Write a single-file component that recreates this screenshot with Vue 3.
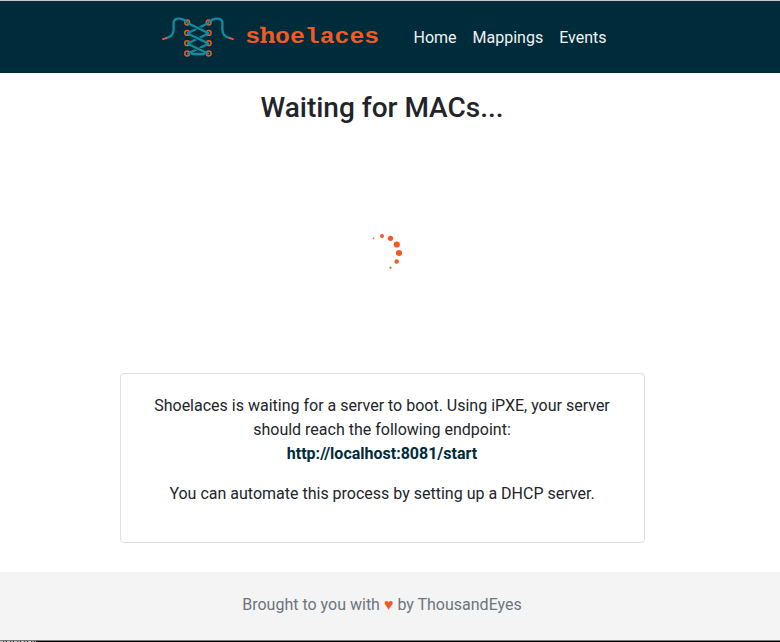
<script setup>
const links = ['Home', 'Mappings', 'Events']
const eyelets = [22.5, 32.9, 43.2, 53.5]
const dots = [
  { x: 373.5, y: 238.3, r: 0.8 },
  { x: 382, y: 236, r: 2 },
  { x: 390.5, y: 238.3, r: 2.6 },
  { x: 396.8, y: 244.5, r: 3.1 },
  { x: 399, y: 253, r: 3.1 },
  { x: 396.7, y: 261.5, r: 2.2 },
  { x: 390.5, y: 267.7, r: 1.1 },
]
</script>

<template>
  <div class="page">
    <header class="navbar">
      <svg class="logo" viewBox="155 1 235 71" width="235" height="71">
        <g fill="none" stroke="#f15a22" stroke-width="1.5">
          <template v-for="y in eyelets" :key="y">
            <circle cx="187.2" :cy="y" r="2.4" />
            <circle cx="208.7" :cy="y" r="2.4" />
          </template>
        </g>
        <g fill="none" stroke="#118c9c" stroke-width="2.3" stroke-linecap="round">
          <path d="M208 23.3L188 33M208 33.8L188 43.3M208 44L188 53.5M192 54H204" />
          <path stroke="#002b3a" stroke-width="3.6" stroke-linecap="butt" d="M194.5 26.5L202 30.1M194.5 36.9L202 40.4M194.5 47.1L202 50.7" />
          <path d="M188 23.3L208 33M188 33.8L208 43.3M188 44L208 53.5" />
          <path d="M187 22C183 18.3 175.5 17.2 173.9 21.3C172.6 25.5 175.4 31 171.8 35C170.5 36.8 168.5 37.5 166.5 38" />
          <path d="M209 22C213 18.3 220.5 17.2 222.1 21.3C223.4 25.5 220.6 31 224.2 35C225.5 36.8 227.5 37.5 229.5 38" />
        </g>
        <path d="M162.3 39.4L167 37.9M233.7 39.4L229 37.9" stroke="#f15a22" stroke-width="2" />
        <text class="wordmark" transform="translate(245.3 42.8) scale(1 .9)">shoelaces</text>
        <path d="M260.2 27.7H264M260.4 41.9H267M269 41.9H275.2" stroke="#f15a22" stroke-width="1.9" />
      </svg>
      <nav class="links">
        <a v-for="link in links" :key="link">{{ link }}</a>
      </nav>
    </header>
    <main>
      <h1>Waiting for MACs...</h1>
      <div class="loading">
        <svg viewBox="362 233 40 40" width="40" height="40">
          <circle v-for="d in dots" :key="d.y + d.x" :cx="d.x" :cy="d.y" :r="d.r" fill="#f15a22" />
        </svg>
      </div>
      <section class="card">
        <p>Shoelaces is waiting for a server to boot. Using iPXE, your server should reach the following endpoint:<br><strong>http://localhost:8081/start</strong></p>
        <p>You can automate this process by setting up a DHCP server.</p>
      </section>
    </main>
    <footer>Brought to you with <span class="heart">♥</span> by ThousandEyes</footer>
    <div class="edge"><span></span></div>
  </div>
</template>

<style>
body { margin: 0; overflow: hidden; }
</style>

<style scoped>
* { box-sizing: border-box; }
.page {
  height: 642px;
  display: flex;
  flex-direction: column;
  border-top: 1px solid #c9c7c0;
  background: #fff;
  color: #212529;
  font: 16px/24px Roboto, sans-serif;
}
.navbar {
  height: 72px;
  padding-left: 155px;
  display: flex;
  align-items: center;
  background: #002b3a;
}
.logo { display: block; height: 71px; flex: none; margin-bottom: 1px; }
.wordmark {
  font: bold 24.8px "Liberation Mono", monospace;
  fill: #f15a22;
}
.links {
  display: flex;
  gap: 16px;
  margin-left: 23.5px;
  padding-top: 2px;
  color: #f1f3f4;
}
main {
  width: 525px;
  margin-left: 120px;
  height: 499px;
  display: flex;
  flex-direction: column;
}
h1 {
  margin: 18px 0 0;
  padding-right: 1px;
  font-size: 28px;
  line-height: 34px;
  font-weight: 500;
  text-align: center;
}
.loading {
  height: 248px;
  padding: 108px 2px 0 0;
  display: flex;
  justify-content: center;
}
.card {
  height: 170px;
  border: 1px solid #dfdfdf;
  border-radius: 4px;
  padding: 20px 21px 20px 20px;
  text-align: center;
}
.card p { margin: 0 0 16px; }
strong { color: #002b3a; }
footer {
  height: 68px;
  padding: 21px 16px 0 0;
  background: #f4f4f4;
  color: #6c757d;
  text-align: center;
}
.heart { color: #f15a22; }
.edge {
  height: 2px;
  border-top: 1px solid #777;
  background: #000;
  display: flex;
}
.edge span {
  width: 36px;
  height: 1px;
  background: repeating-linear-gradient(90deg, #ccc 0 3px, #444 3px 4px, #aaa 4px 6px, #222 6px 7px);
}
</style>
